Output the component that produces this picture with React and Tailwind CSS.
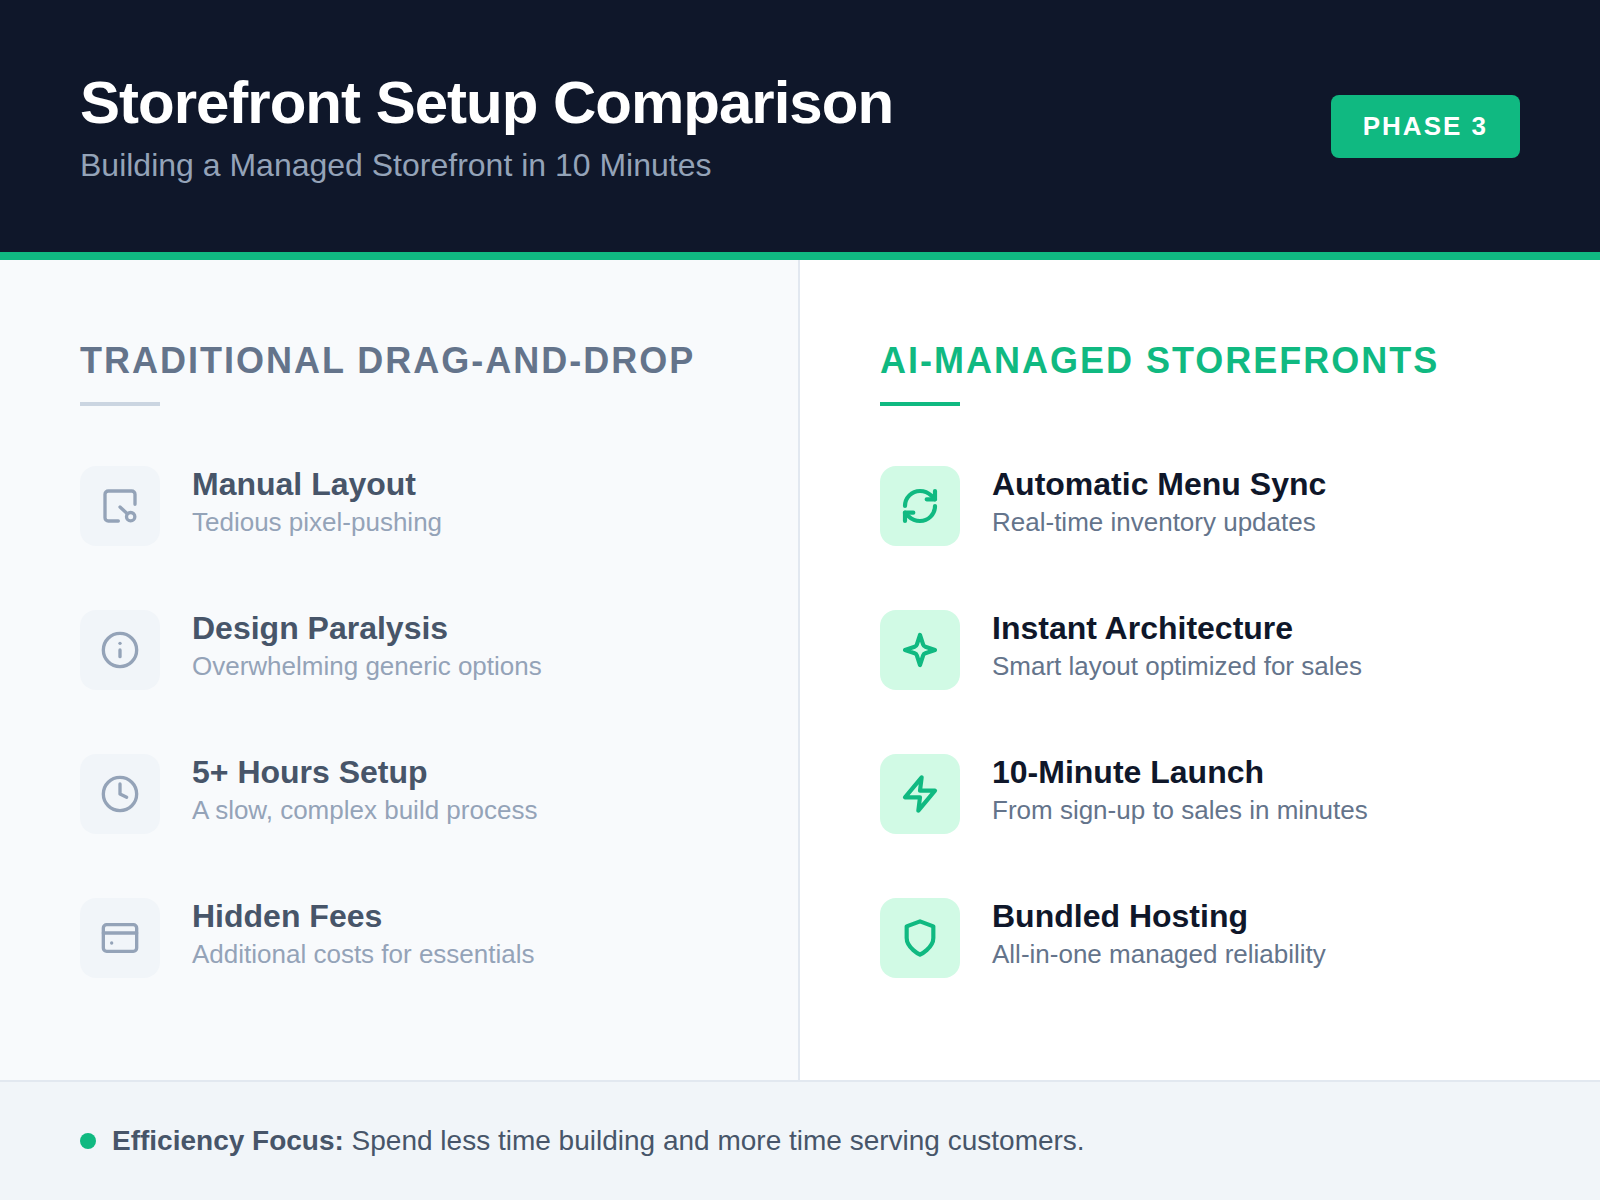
import React from "react";
import { RefreshCw, Info, Clock } from "lucide-react";

const Svg = ({ width = 2.5, children }) => (
  <svg
    width="40"
    height="40"
    viewBox="0 0 24 24"
    fill="none"
    stroke="currentColor"
    strokeWidth={width}
    strokeLinecap="round"
    strokeLinejoin="round"
  >
    {children}
  </svg>
);

const LayoutIcon = () => (
  <Svg width={2}>
    <path d="M21 11V5a2 2 0 0 0-2-2H5a2 2 0 0 0-2 2v14a2 2 0 0 0 2 2h6" />
    <path d="M12 12.6l4.4 4" />
    <circle cx="18.4" cy="18.4" r="2.5" />
  </Svg>
);

const CardIcon = () => (
  <Svg width={2}>
    <rect x="2" y="4" width="20" height="16" rx="2" />
    <path d="M2 9h20" />
    <path d="M7 15h.01" />
  </Svg>
);

const SparkleIcon = () => (
  <Svg>
    <path d="M12 3l1.9 5.8a2 2 0 0 0 1.3 1.3L21 12l-5.8 1.9a2 2 0 0 0-1.3 1.3L12 21l-1.9-5.8a2 2 0 0 0-1.3-1.3L3 12l5.8-1.9a2 2 0 0 0 1.3-1.3z" />
  </Svg>
);

const ZapIcon = () => (
  <Svg>
    <path d="M13 2 3 14h9l-1 8 10-12h-9l1-8z" />
  </Svg>
);

const ShieldIcon = () => (
  <Svg>
    <path d="M12 22s8-4 8-10V5l-8-3-8 3v7c0 6 8 10 8 10z" />
  </Svg>
);

const oldWay = [
  { icon: <LayoutIcon />, title: "Manual Layout", text: "Tedious pixel-pushing" },
  { icon: <Info size={40} strokeWidth={2} />, title: "Design Paralysis", text: "Overwhelming generic options" },
  { icon: <Clock size={40} strokeWidth={2} />, title: "5+ Hours Setup", text: "A slow, complex build process" },
  { icon: <CardIcon />, title: "Hidden Fees", text: "Additional costs for essentials" },
];

const newWay = [
  { icon: <RefreshCw size={40} strokeWidth={2.5} />, title: "Automatic Menu Sync", text: "Real-time inventory updates" },
  { icon: <SparkleIcon />, title: "Instant Architecture", text: "Smart layout optimized for sales" },
  { icon: <ZapIcon />, title: "10-Minute Launch", text: "From sign-up to sales in minutes" },
  { icon: <ShieldIcon />, title: "Bundled Hosting", text: "All-in-one managed reliability" },
];

const Item = ({ item, accent }) => (
  <div className="flex items-start gap-8">
    <div
      className={`flex h-20 w-20 shrink-0 items-center justify-center rounded-2xl ${
        accent ? "bg-[#d1fae5] text-[#10b981]" : "bg-[#f1f5f9] text-[#94a3b8]"
      }`}
    >
      {item.icon}
    </div>
    <div>
      <div className={`text-[32px] font-bold leading-9 ${accent ? "text-[#0f172a]" : "text-[#475569]"}`}>
        {item.title}
      </div>
      <div className={`mt-[2px] text-[26px] leading-9 ${accent ? "text-[#64748b]" : "text-[#94a3b8]"}`}>
        {item.text}
      </div>
    </div>
  </div>
);

export default function App() {
  return (
    <div className="flex h-[1200px] w-[1600px] flex-col overflow-hidden bg-white font-['Liberation_Sans',Arial,sans-serif]">
      <header className="flex h-[260px] items-center justify-between border-b-8 border-[#10b981] bg-[#0f172a] px-20">
        <div className="pt-1">
          <h1 className="mb-[2px] text-[60px] font-bold leading-[72px] tracking-[-1px] text-white">Storefront Setup Comparison</h1>
          <p className="text-[32px] leading-[48px] text-[#94a3b8]">Building a Managed Storefront in 10 Minutes</p>
        </div>
        <div className="rounded-lg bg-[#10b981] px-8 py-4 text-[26px] font-bold leading-[31px] tracking-[2px] text-white">
          PHASE 3
        </div>
      </header>

      <main className="grid flex-1 grid-cols-2">
        <section className="border-r-2 border-[#e2e8f0] bg-[#f8fafc] px-20 pt-[81px]">
          <h2 className="text-[36px] font-bold leading-[40px] tracking-[2px] text-[#64748b]">TRADITIONAL DRAG-AND-DROP</h2>
          <div className="mt-[21px] mb-15 h-1 w-20 bg-[#cbd5e1]" />
          <div className="flex flex-col gap-16">
            {oldWay.map((item) => (
              <Item key={item.title} item={item} />
            ))}
          </div>
        </section>
        <section className="px-20 pt-[81px]">
          <h2 className="text-[36px] font-bold leading-[40px] tracking-[2px] text-[#10b981]">AI-MANAGED STOREFRONTS</h2>
          <div className="mt-[21px] mb-15 h-1 w-20 bg-[#10b981]" />
          <div className="flex flex-col gap-16">
            {newWay.map((item) => (
              <Item key={item.title} item={item} accent />
            ))}
          </div>
        </section>
      </main>

      <footer className="flex h-[120px] items-center gap-4 border-t-2 border-[#e2e8f0] bg-[#f1f5f9] px-20 text-[28px] text-[#475569]">
        <span className="h-4 w-4 rounded-full bg-[#10b981]" />
        <p>
          <strong className="font-bold">Efficiency Focus:</strong> Spend less time building and more time serving customers.
        </p>
      </footer>
    </div>
  );
}
